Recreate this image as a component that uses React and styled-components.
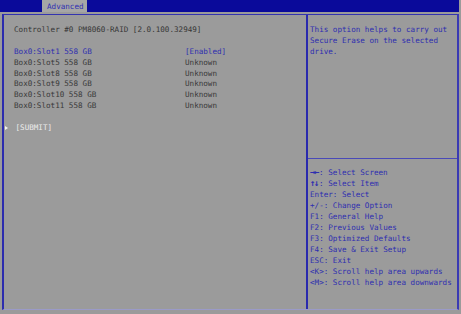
import styled, { createGlobalStyle } from 'styled-components'

const Global = createGlobalStyle`
	html, body {
		margin: 0;
		padding: 0;
		background: #9b9b9b;
		overflow: hidden;
	}
	body {
		font-family: 'DejaVu Sans Mono', 'Liberation Mono', monospace;
		font-size: 7.6px;
		-webkit-font-smoothing: antialiased;
	}
`

const devices = [
	{ name: 'Box0:Slot1 558 GB', value: '[Enabled]', active: true },
	{ name: 'Box0:Slot5 558 GB', value: 'Unknown' },
	{ name: 'Box0:Slot8 558 GB', value: 'Unknown' },
	{ name: 'Box0:Slot9 558 GB', value: 'Unknown' },
	{ name: 'Box0:Slot10 558 GB', value: 'Unknown' },
	{ name: 'Box0:Slot11 558 GB', value: 'Unknown' },
]

const keys = [
	['→←', ': Select Screen'],
	['↑↓', ': Select Item'],
	['', 'Enter: Select'],
	['', '+/-: Change Option'],
	['', 'F1: General Help'],
	['', 'F2: Previous Values'],
	['', 'F3: Optimized Defaults'],
	['', 'F4: Save & Exit Setup'],
	['', 'ESC: Exit'],
	['', '<K>: Scroll help area upwards'],
	['', '<M>: Scroll help area downwards'],
]

export default function App() {
	return (
		<Screen>
			<Global />
			<TopBar>
				<Tab>Advanced</Tab>
			</TopBar>
			<Frame>
				<Main>
					<Line>Controller #0 PM8060-RAID [2.0.100.32949]</Line>
					<Blank />
					{devices.map((d) => (
						<Row key={d.name} $active={d.active}>
							<span>{d.name}</span>
							<span>{d.value}</span>
						</Row>
					))}
					<Blank />
					<Submit>[SUBMIT]</Submit>
				</Main>
				<Side>
					<Help>
						This option helps to carry out
						<br />
						Secure Erase on the selected
						<br />
						drive.
					</Help>
					<Keys>
						{keys.map(([arrow, text]) => (
							<KeyLine key={text}>
								{arrow && <Arrow>{arrow}</Arrow>}
								{text}
							</KeyLine>
						))}
					</Keys>
				</Side>
			</Frame>
		</Screen>
	)
}

const Screen = styled.div`
	width: 461px;
	height: 314px;
	display: flex;
	flex-direction: column;
`

const TopBar = styled.div`
	height: 12px;
	width: 459px;
	background: #0a0a9a;
	display: flex;
	padding-left: 42px;
	box-sizing: border-box;
`

const Tab = styled.div`
	width: 45px;
	height: 12px;
	background: #a6a6a6;
	color: #3030b2;
	line-height: 13px;
	padding-left: 5px;
	box-sizing: border-box;
`

const Frame = styled.div`
	margin: 2px 0 0 2px;
	width: 457px;
	height: 296px;
	box-sizing: border-box;
	border-left: 2px solid #2c2cae;
	border-right: 2px solid #3a3ab4;
	border-top: 1px solid #3434b0;
	border-bottom: 1px solid #9a9ac8;
	display: grid;
	grid-template-columns: 302px 1fr;
`

const Main = styled.div`
	padding: 10.4px 0 0 10px;
	color: #363636;
	line-height: 10.8px;
`

const Line = styled.div`
	white-space: pre;
`

const Blank = styled.div`
	height: 10.8px;
`

const Row = styled.div`
	display: grid;
	grid-template-columns: 171px 1fr;
	white-space: pre;
	color: ${(p) => (p.$active ? '#2e2eb0' : '#383838')};
`

const Submit = styled.div`
	color: #ececec;
	padding-left: 1.5px;
	position: relative;

	&::before {
		content: '';
		position: absolute;
		left: -9px;
		top: 3px;
		border-left: 3px solid #f4f4f4;
		border-top: 2.5px solid transparent;
		border-bottom: 2.5px solid transparent;
	}
`

const Side = styled.div`
	border-left: 2px solid #2a2aae;
	display: flex;
	flex-direction: column;
	color: #2e2eb0;
`

const Help = styled.div`
	height: 144px;
	padding: 8.5px 0 0 2px;
	line-height: 11px;
	border-bottom: 1px solid #4a4ab8;
	box-sizing: border-box;
`

const Keys = styled.div`
	padding: 8.2px 0 0 2px;
	line-height: 11px;
`

const KeyLine = styled.div`
	white-space: pre;
`

const Arrow = styled.span`
	display: inline-block;
	width: 9.1px;
	font-size: 9px;
	font-weight: bold;
	letter-spacing: -1.5px;
	line-height: 11px;
	vertical-align: top;
`
